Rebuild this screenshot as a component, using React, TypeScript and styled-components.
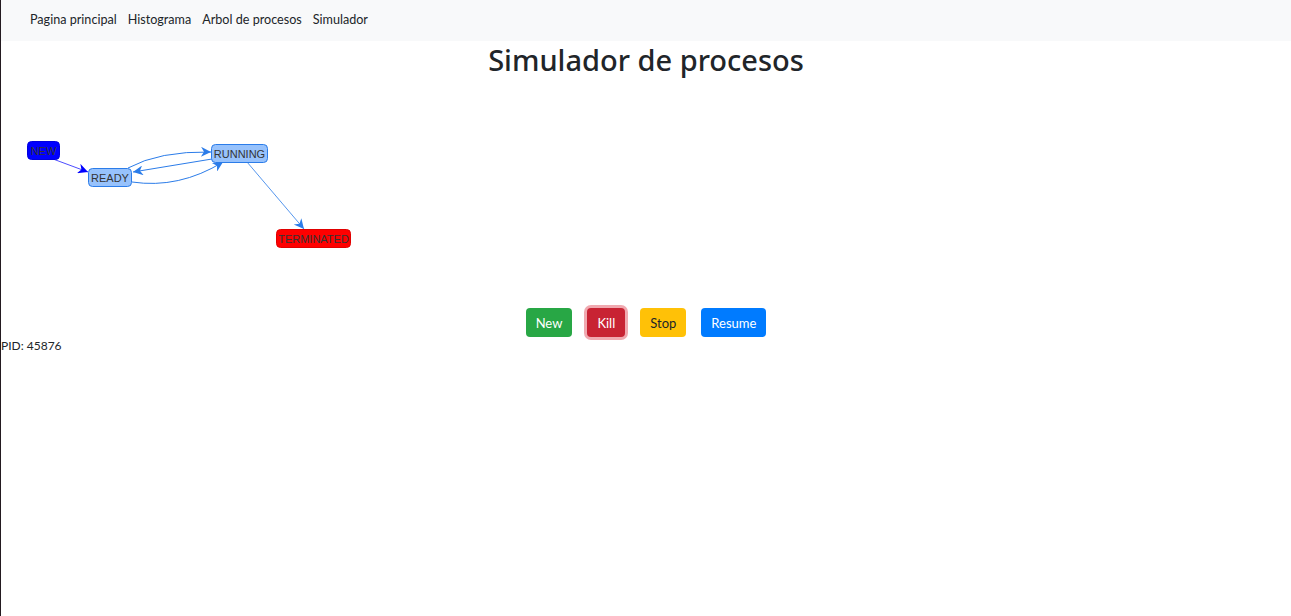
import React from "react";
import styled, { createGlobalStyle } from "styled-components";

const Global = createGlobalStyle`
  html, body { margin: 0; padding: 0; background: #fff; }
  body { font-family: Lato, "Noto Sans", sans-serif; color: #212529; }
  #root { min-height: 616px; border-left: 1px solid #231a20; box-sizing: border-box; }
`;

const Navbar = styled.nav`
  height: 41px;
  background: #f8f9fa;
  display: flex;
  align-items: center;
  padding-left: 29px;
  padding-bottom: 2px;
  box-sizing: border-box;
  gap: 11px;
`;

const NavLink = styled.a`
  font-size: 12.6px;
  color: #212529;
  text-decoration: none;
  cursor: pointer;
`;

const Title = styled.h1`
  margin: 0;
  text-align: center;
  font-family: "Noto Sans", sans-serif;
  font-size: 29px;
  font-weight: 500;
  line-height: 38px;
  color: #212529;
`;

const GraphBox = styled.div`
  height: 229px;
  position: relative;
`;

const NodeText = styled.text`
  font-family: "Liberation Sans", Arial, sans-serif;
  font-size: 11px;
  fill: #343434;
`;

const ButtonRow = styled.div`
  display: flex;
  justify-content: center;
  gap: 15px;
`;

const Btn = styled.button<{ $bg: string; $fg: string; $ring?: string }>`
  height: 29px;
  padding: 0 10px;
  border: none;
  border-radius: 4px;
  background: ${(p) => p.$bg};
  color: ${(p) => p.$fg};
  font-family: Lato, "Noto Sans", sans-serif;
  font-size: 13px;
  box-shadow: ${(p) => (p.$ring ? `0 0 0 3px ${p.$ring}` : "none")};
  cursor: pointer;
`;

const Pid = styled.div`
  font-size: 12px;
  line-height: 16px;
  margin-top: 1px;
  color: #212529;
`;

const EDGE = "#2b7ce9";

function Graph() {
  return (
    <svg width="400" height="229" viewBox="0 0 400 229">
      <defs>
        <marker id="arrB" viewBox="0 0 10 10" refX="10" refY="5" markerWidth="13" markerHeight="10" orient="auto" markerUnits="userSpaceOnUse">
          <path d="M0 0 L10 5 L0 10 L3 5 Z" fill="#0000ff" />
        </marker>
        <marker id="arrE" viewBox="0 0 10 10" refX="10" refY="5" markerWidth="13" markerHeight="10" orient="auto" markerUnits="userSpaceOnUse">
          <path d="M0 0 L10 5 L0 10 L3 5 Z" fill={EDGE} />
        </marker>
      </defs>
      <g fill="none" strokeWidth="1">
        <line x1="52" y1="80" x2="87" y2="93" stroke="#4d4dff" markerEnd="url(#arrB)" />
        <path d="M127 89 Q158 72 210 73" stroke={EDGE} markerEnd="url(#arrE)" />
        <line x1="211" y1="80" x2="132" y2="93" stroke={EDGE} markerEnd="url(#arrE)" />
        <path d="M131 103 Q178 110 222 83" stroke={EDGE} markerEnd="url(#arrE)" />
        <line x1="246" y1="83" x2="303" y2="150" stroke={EDGE} strokeOpacity="0.8" markerEnd="url(#arrE)" />
      </g>
      <rect x="26.5" y="62.5" width="32" height="18" rx="4" fill="#0000ff" stroke="#0000dd" />
      <NodeText x="42.5" y="75.5" textAnchor="middle">NEW</NodeText>
      <rect x="87.5" y="89.5" width="43" height="18" rx="4" fill="#97c2fc" stroke={EDGE} />
      <NodeText x="109" y="102.5" textAnchor="middle">READY</NodeText>
      <rect x="210.5" y="65.5" width="56" height="18" rx="4" fill="#97c2fc" stroke={EDGE} />
      <NodeText x="238.5" y="78.5" textAnchor="middle">RUNNING</NodeText>
      <rect x="275.5" y="150.5" width="74" height="18" rx="4" fill="#ff0000" stroke="#e00000" />
      <NodeText x="312.5" y="163.5" textAnchor="middle">TERMINATED</NodeText>
    </svg>
  );
}

export default function App() {
  return (
    <>
      <Global />
      <Navbar>
        <NavLink>Pagina principal</NavLink>
        <NavLink>Histograma</NavLink>
        <NavLink>Arbol de procesos</NavLink>
        <NavLink>Simulador</NavLink>
      </Navbar>
      <Title>Simulador de procesos</Title>
      <GraphBox>
        <Graph />
      </GraphBox>
      <ButtonRow>
        <Btn $bg="#28a745" $fg="#fff">New</Btn>
        <Btn $bg="#c82333" $fg="#fff" $ring="rgba(225,83,97,0.5)">Kill</Btn>
        <Btn $bg="#ffc107" $fg="#212529">Stop</Btn>
        <Btn $bg="#007bff" $fg="#fff">Resume</Btn>
      </ButtonRow>
      <Pid>PID: 45876</Pid>
    </>
  );
}
